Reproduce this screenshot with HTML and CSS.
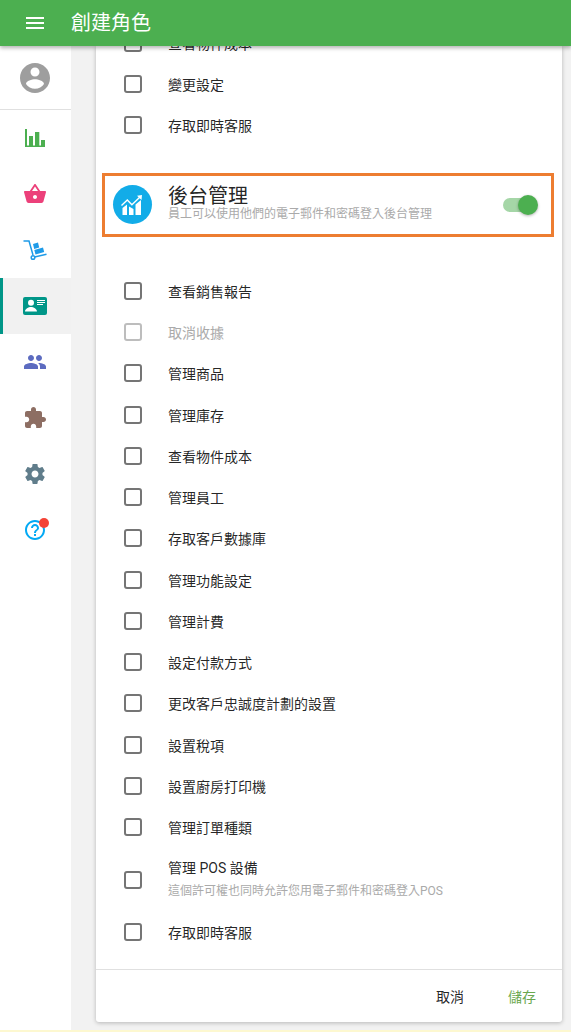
FILE: index.html
```html
<!DOCTYPE html>
<html lang="zh-Hant">
<head>
<meta charset="utf-8">
<title>創建角色</title>
<link rel="stylesheet" href="styles.css">
</head>
<body>
<div class="page">
  <header class="topbar">
    <button class="menu-btn" aria-label="menu"><span></span><span></span><span></span></button>
    <h1 class="title">創建角色</h1>
  </header>
  <div class="content">
    <nav class="sidebar">
      <div class="account">
        <svg class="i36" viewBox="0 0 24 24"><path fill="#9e9e9e" d="M12 2C6.48 2 2 6.48 2 12s4.48 10 10 10 10-4.48 10-10S17.52 2 12 2zm0 3c1.66 0 3 1.34 3 3s-1.34 3-3 3-3-1.34-3-3 1.34-3 3-3zm0 14.2c-2.5 0-4.71-1.28-6-3.22.03-1.99 4-3.08 6-3.08 1.99 0 5.97 1.09 6 3.08-1.29 1.94-3.5 3.22-6 3.22z"/></svg>
      </div>
      <a class="nav-item">
        <svg class="i24" viewBox="0 0 24 24"><path fill="#4caf50" d="M2 3h2v16.500h2V10h4v9.500h2V6h4.300v13.500H18V14h4v7H2z"/></svg>
      </a>
      <a class="nav-item">
        <svg class="i24" viewBox="0 0 24 24"><path fill="#ec407a" d="M17.21 9l-4.38-6.56c-.19-.28-.51-.42-.83-.42-.32 0-.64.14-.83.43L6.79 9H2c-.55 0-1 .45-1 1 0 .09.01.18.04.27l2.54 9.27c.23.84 1 1.46 1.92 1.46h13c.92 0 1.69-.62 1.93-1.46l2.54-9.27L23 10c0-.55-.45-1-1-1h-4.79zM9 9l3-4.4L15 9H9zm3 8c-1.1 0-2-.9-2-2s.9-2 2-2 2 .9 2 2-.9 2-2 2z"/></svg>
      </a>
      <a class="nav-item">
        <svg class="i24" viewBox="0 0 24 24"><g fill="none" stroke="#1e9be8" stroke-width="1.500"><path d="M.5 3H6l4 14"/><path d="M11.500 19l12-2.700"/><circle cx="10" cy="19.500" r="1.800"/></g><path fill="#1e9be8" d="M10 6l5-1.500 1.200 5-5 1.500zM11.300 12l8.700-2.500 1.200 4.500-8.700 2.500z"/></svg>
      </a>
      <a class="nav-item active">
        <svg class="i24" viewBox="0 0 24 24"><rect x="0" y="3" width="24" height="18" rx="2" fill="#009688"/><circle cx="8" cy="8.700" r="3" fill="#fff"/><path fill="#fff" d="M2 17.500c0-2.700 3.500-4.500 6-4.500s6 1.800 6 4.500zM14 6h8v.9h-8zM14 8h8v.9h-8zM14 10h6v.9h-6z"/></svg>
      </a>
      <a class="nav-item">
        <svg class="i24" viewBox="0 0 24 24"><path fill="#5c6bc0" d="M16 11c1.660 0 2.990-1.340 2.990-3S17.660 5 16 5c-1.660 0-3 1.340-3 3s1.340 3 3 3zm-8 0c1.660 0 2.990-1.340 2.990-3S9.660 5 8 5C6.340 5 5 6.340 5 8s1.340 3 3 3zm0 2c-2.330 0-7 1.170-7 3.500V19h14v-2.500c0-2.330-4.670-3.500-7-3.500zm8 0c-.29 0-.62.020-.97.050 1.160.84 1.970 1.970 1.970 3.450V19h6v-2.500c0-2.330-4.670-3.500-7-3.500z"/></svg>
      </a>
      <a class="nav-item">
        <svg class="i24" viewBox="0 0 24 24"><path fill="#8d6e63" d="M20.500 11H19V7c0-1.100-.9-2-2-2h-4V3.500C13 2.120 11.880 1 10.500 1S8 2.120 8 3.500V5H4c-1.100 0-1.990.9-1.990 2v3.800H3.500c1.490 0 2.700 1.210 2.700 2.700s-1.210 2.700-2.700 2.700H2V20c0 1.100.9 2 2 2h3.800v-1.500c0-1.490 1.210-2.700 2.700-2.700 1.490 0 2.700 1.210 2.700 2.700V22H17c1.100 0 2-.9 2-2v-4h1.500c1.380 0 2.500-1.120 2.500-2.500S21.880 11 20.500 11z"/></svg>
      </a>
      <a class="nav-item">
        <svg class="i24" viewBox="0 0 24 24"><path fill="#607d8b" d="M19.430 12.980c.04-.32.070-.64.070-.98s-.03-.66-.07-.98l2.110-1.650c.19-.15.24-.42.120-.64l-2-3.460c-.12-.22-.39-.3-.61-.22l-2.490 1c-.52-.4-1.080-.73-1.690-.98l-.38-2.650C14.460 2.180 14.250 2 14 2h-4c-.25 0-.46.18-.49.42l-.38 2.650c-.61.25-1.170.59-1.690.98l-2.490-1c-.23-.09-.49 0-.61.22l-2 3.460c-.13.22-.7.490.12.640l2.110 1.650c-.04.32-.07.65-.07.98s.03.66.07.98l-2.110 1.650c-.19.15-.24.42-.12.64l2 3.460c.12.22.39.3.61.22l2.490-1c.52.4 1.080.73 1.690.98l.38 2.650c.03.24.24.42.49.42h4c.25 0 .46-.18.49-.42l.38-2.650c.61-.25 1.170-.59 1.690-.98l2.490 1c.23.09.49 0 .61-.22l2-3.460c.12-.22.07-.49-.12-.64l-2.110-1.650zM12 15.500c-1.930 0-3.500-1.570-3.500-3.500s1.570-3.500 3.500-3.500 3.500 1.570 3.500 3.500-1.570 3.500-3.500 3.500z"/></svg>
      </a>
      <a class="nav-item">
        <span class="help">
          <svg class="i24" viewBox="0 0 24 24"><path fill="#03a9f4" d="M11 18h2v-2h-2v2zm1-16C6.480 2 2 6.480 2 12s4.480 10 10 10 10-4.480 10-10S17.520 2 12 2zm0 18c-4.410 0-8-3.590-8-8s3.590-8 8-8 8 3.590 8 8-3.590 8-8 8zm0-14c-2.210 0-4 1.790-4 4h2c0-1.100.9-2 2-2s2 .9 2 2c0 2-3 1.750-3 5h2c0-2.250 3-2.500 3-5 0-2.210-1.790-4-4-4z"/></svg>
          <span class="badge"></span>
        </span>
      </a>
    </nav>
    <main class="main">
      <section class="card">
        <div class="scroll">
          <ul class="perms perms-top">
            <li class="row"><span class="box"></span><span>查看物件成本</span></li>
            <li class="row"><span class="box"></span><span>變更設定</span></li>
            <li class="row"><span class="box"></span><span>存取即時客服</span></li>
          </ul>
          <div class="section-head">
            <span class="section-icon">
              <svg class="section-glyph" viewBox="0 0 22 20"><path fill="#fff" d="M1.500 20v-7L6 9.500V20zM8 20v-8.500l4.500 2.500v6zM14.500 20V9.500L20 5v15z"/><path fill="none" stroke="#fff" stroke-width="1.400" d="M.5 10.500L6.300 5l4.600 4.800L19 2"/><path fill="#fff" d="M16 .7L21 0l-.5 5z"/></svg>
            </span>
            <div class="section-text">
              <div class="section-title">後台管理</div>
              <div class="section-sub">員工可以使用他們的電子郵件和密碼登入後台管理</div>
            </div>
            <span class="switch"><span class="knob"></span></span>
          </div>
          <ul class="perms perms-main">
            <li class="row"><span class="box"></span><span>查看銷售報告</span></li>
            <li class="row disabled"><span class="box"></span><span>取消收據</span></li>
            <li class="row"><span class="box"></span><span>管理商品</span></li>
            <li class="row"><span class="box"></span><span>管理庫存</span></li>
            <li class="row"><span class="box"></span><span>查看物件成本</span></li>
            <li class="row"><span class="box"></span><span>管理員工</span></li>
            <li class="row"><span class="box"></span><span>存取客戶數據庫</span></li>
            <li class="row"><span class="box"></span><span>管理功能設定</span></li>
            <li class="row"><span class="box"></span><span>管理計費</span></li>
            <li class="row"><span class="box"></span><span>設定付款方式</span></li>
            <li class="row"><span class="box"></span><span>更改客戶忠誠度計劃的設置</span></li>
            <li class="row"><span class="box"></span><span>設置稅項</span></li>
            <li class="row"><span class="box"></span><span>設置廚房打印機</span></li>
            <li class="row"><span class="box"></span><span>管理訂單種類</span></li>
            <li class="row row-tall"><span class="box"></span><div class="two-line"><div>管理 POS 設備</div><div class="hint">這個許可權也同時允許您用電子郵件和密碼登入POS</div></div></li>
            <li class="row"><span class="box"></span><span>存取即時客服</span></li>
          </ul>
        </div>
        <footer class="actions">
          <button class="btn">取消</button>
          <button class="btn save">儲存</button>
        </footer>
      </section>
    </main>
  </div>
  <div class="strip"></div>
</div>
</body>
</html>
```

FILE: styles.css
```css
* { box-sizing: border-box; }
html, body { margin: 0; padding: 0; height: 100%; }
body {
  font-family: Roboto, "Noto Sans CJK TC", "Noto Sans", sans-serif;
  font-size: 14px;
  color: rgba(0,0,0,.87);
  background: #f2f2f2;
  overflow: hidden;
}
.page { display: flex; flex-direction: column; height: 1032px; }
.topbar {
  height: 46px;
  flex: none;
  background: #4caf50;
  display: flex;
  align-items: center;
  padding-left: 26px;
  gap: 27px;
  position: relative;
  z-index: 2;
  box-shadow: 0 2px 4px rgba(0,0,0,.3);
}
.menu-btn {
  width: 18px;
  height: 12px;
  padding: 0;
  border: 0;
  background: none;
  display: flex;
  flex-direction: column;
  justify-content: space-between;
}
.menu-btn span { display: block; height: 2px; background: #fff; }
.title { margin: 0; font-size: 20px; font-weight: 400; color: #fff; line-height: 28px; }
.content { flex: 1; display: flex; min-height: 0; }
.sidebar {
  width: 71px;
  flex: none;
  background: #fff;
  display: flex;
  flex-direction: column;
}
.account {
  height: 64px;
  display: flex;
  align-items: center;
  justify-content: center;
  padding-right: 1px;
  border-bottom: 1px solid #e0e0e0;
}
.nav-item { height: 56px; flex: none; display: flex; align-items: center; justify-content: center; padding-right: 1px; }
.nav-item.active { background: #f1f1f1; border-left: 3px solid #009688; padding-right: 4px; }
.i36 { width: 36px; height: 36px; display: block; }
.i24 { width: 24px; height: 24px; display: block; }
.help { position: relative; display: block; width: 24px; height: 24px; }
.badge {
  position: absolute;
  top: 0;
  right: -2px;
  width: 10px;
  height: 10px;
  border-radius: 50%;
  background: #f44336;
}
.main { flex: 1; min-width: 0; padding: 0 9px 8px 25px; display: flex; }
.card {
  flex: 1;
  min-width: 0;
  background: #fff;
  border-radius: 0 0 3px 3px;
  box-shadow: 0 1px 4px rgba(0,0,0,.25);
  display: flex;
  flex-direction: column;
}
.scroll { flex: 1; min-height: 0; overflow: hidden; }
.perms { list-style: none; margin: 0; padding: 0; }
.perms-top { margin-top: -24px; }
.perms-main { margin-top: 33.5px; }
.row {
  height: 41.25px;
  display: flex;
  align-items: center;
  padding-left: 28px;
  gap: 26px;
}
.row-tall { height: 64px; }
.two-line { padding-bottom: 4px; }
.box {
  width: 18px;
  height: 18px;
  flex: none;
  border: 2px solid #757575;
  border-radius: 3px;
  background: #fff;
}
.disabled { color: #aaa; }
.disabled .box { border-color: #bdbdbd; }
.hint { font-size: 12px; color: #aaa; line-height: 16px; margin-top: 6px; }
.section-head {
  margin: 27px 8px 0 6px;
  height: 64px;
  border: 3px solid #ed7d31;
  display: flex;
  align-items: center;
  padding: 0 14px 0 8px;
}
.section-icon {
  width: 39px;
  height: 39px;
  flex: none;
  border-radius: 50%;
  background: #12ace8;
  display: flex;
  align-items: center;
  justify-content: center;
}
.section-glyph { width: 22px; height: 20px; display: block; margin-right: 2px; }
.section-text { flex: 1; min-width: 0; margin-left: 16px; padding-bottom: 4px; }
.section-title { font-size: 20px; line-height: 22px; }
.section-sub { font-size: 12px; line-height: 14px; color: #aaa; }
.switch {
  position: relative;
  width: 34px;
  height: 14px;
  flex: none;
  border-radius: 7px;
  background: #a5d6a7;
}
.knob {
  position: absolute;
  right: -1px;
  top: -3px;
  width: 20px;
  height: 20px;
  border-radius: 50%;
  background: #4caf50;
  box-shadow: 0 1px 3px rgba(0,0,0,.3);
}
.actions {
  height: 53px;
  flex: none;
  border-top: 1px solid #e0e0e0;
  display: flex;
  align-items: center;
  justify-content: flex-end;
  gap: 44px;
  padding-right: 26px;
}
.btn { border: 0; background: none; padding: 0; font: inherit; color: rgba(0,0,0,.87); }
.save { color: #6aa84f; }
.strip { height: 2px; flex: none; background: #fdf8d0; }
```
